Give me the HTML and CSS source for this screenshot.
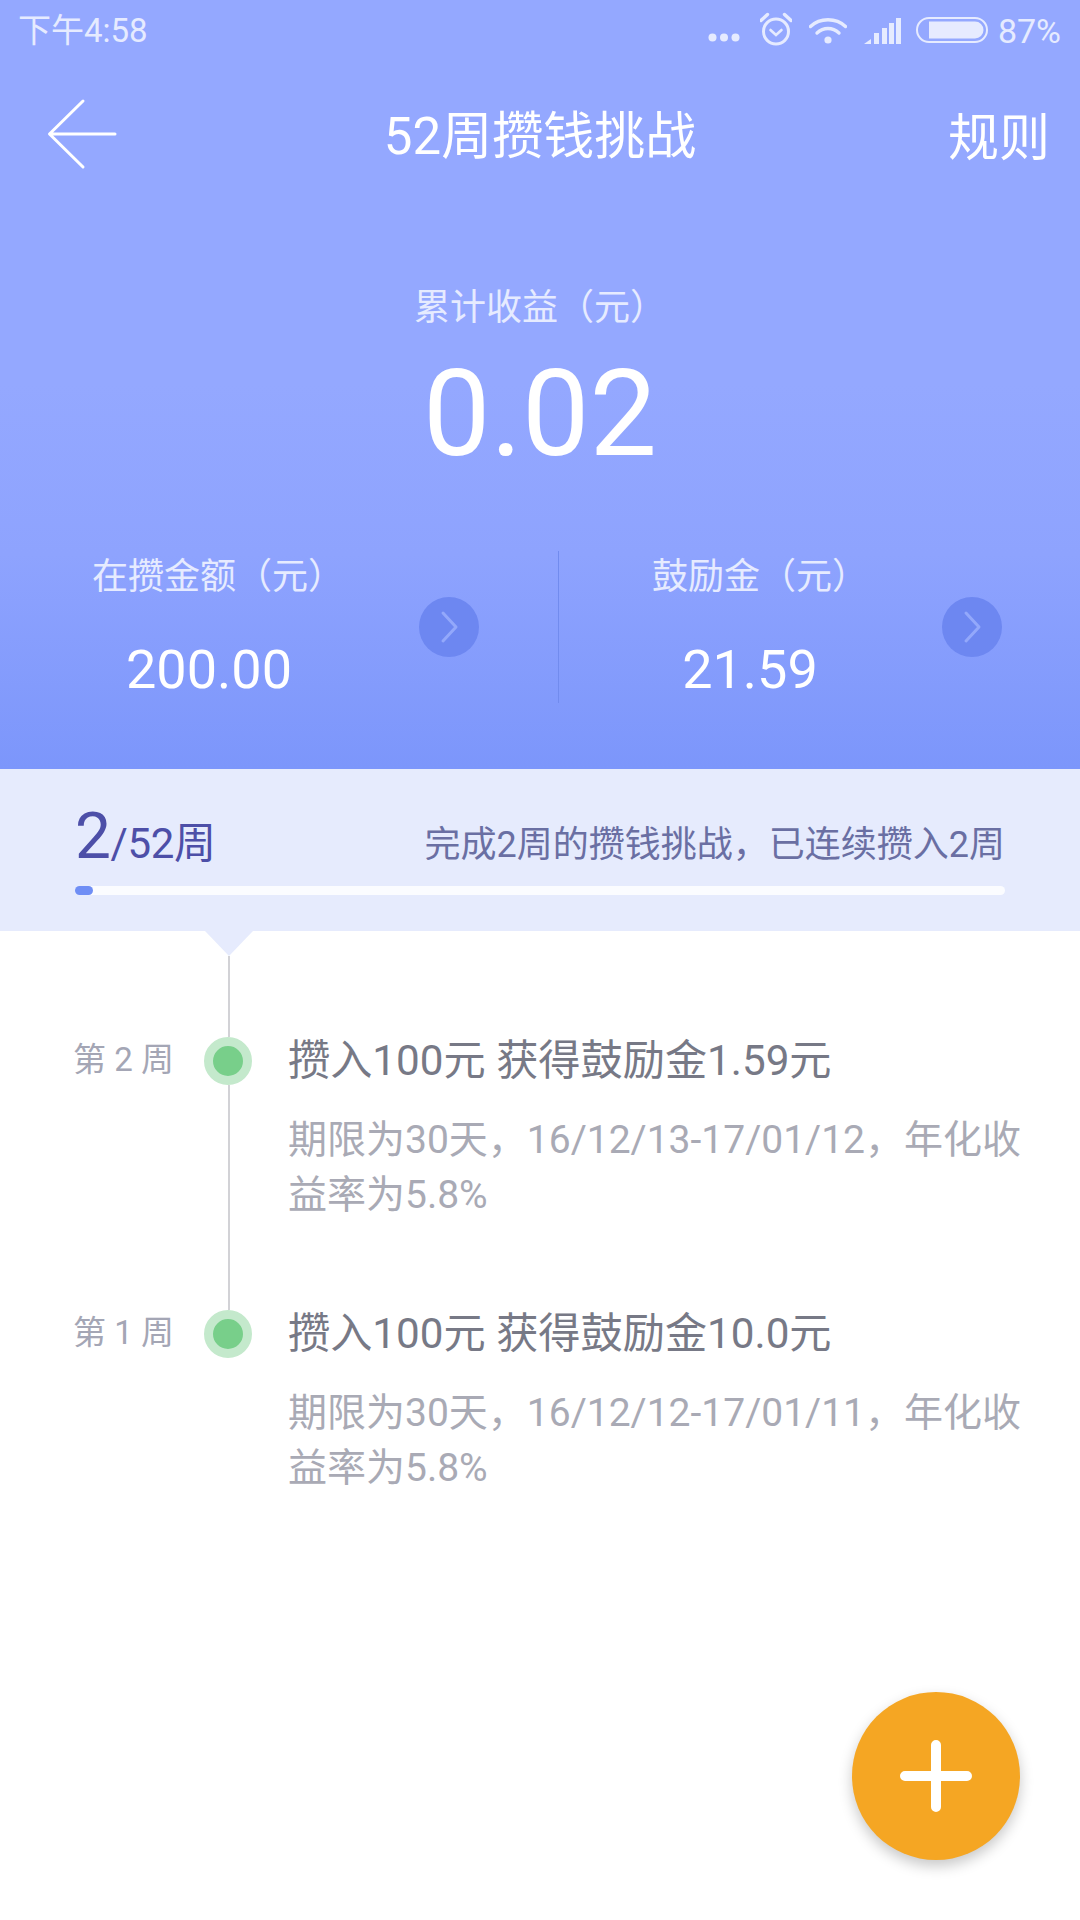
FILE: index.html
```html
<!DOCTYPE html>
<html lang="zh-CN">
<head>
<meta charset="utf-8">
<title>52周攒钱挑战</title>
<link rel="stylesheet" href="styles.css">
</head>
<body>
<div class="page">
  <header class="hero">
    <div class="status">
      <span class="status-time">下午4:58</span>
      <div class="status-right">
        <svg class="ic-dots" viewBox="0 0 32 9" width="32" height="9"><circle cx="4.5" cy="4.5" r="4"/><circle cx="16" cy="4.5" r="4"/><circle cx="27.5" cy="4.5" r="4"/></svg>
        <svg class="ic-alarm" viewBox="0 0 32 34" width="32" height="34"><circle cx="16" cy="19.5" r="12.5" class="ln" stroke-width="3"/><path d="M10.5 18l5.5 5 5.5-5" class="ln" stroke-width="2.6"/><path d="M1 8.5 7.5 2.5M31 8.5 24.500 2.500" class="ln" stroke-width="3.4"/></svg>
        <svg class="ic-wifi" viewBox="0 0 38 27" width="38" height="27"><path d="M1.500 9.500C11 .5 27 .5 36.500 9.500" class="ln" stroke-width="3.400"/><path d="M8 16C14.500 10 23.500 10 30 16" class="ln" stroke-width="3.400"/><circle cx="19" cy="23" r="3.600"/></svg>
        <svg class="ic-signal" viewBox="0 0 37 26" width="37" height="26"><path d="M0 26 7 21V26Z"/><rect x="10" y="15" width="5" height="11"/><rect x="18" y="10" width="5" height="16"/><rect x="25" y="5" width="5" height="21"/><rect x="32" y="0" width="5" height="26"/></svg>
        <svg class="ic-batt" viewBox="0 0 72 26" width="72" height="26"><rect x="1" y="1" width="70" height="24" rx="12" class="ln" stroke-width="2"/><path d="M13 4.500H59a8.500 8.500 0 0 1 0 17H13Z"/></svg>
        <span class="status-pct">87%</span>
      </div>
    </div>
    <nav class="nav">
      <svg class="nav-back" viewBox="0 0 72 72" width="72" height="72"><path d="M69 36H4M37 3 3.500 36 37 69"/></svg>
      <h1 class="nav-title">52周攒钱挑战</h1>
      <span class="nav-rule">规则</span>
    </nav>
    <div class="total">
      <div class="total-label">累计收益（元）</div>
      <div class="total-value">0.02</div>
    </div>
    <div class="stats">
      <div class="stat stat-left">
        <div class="stat-text">
          <div class="stat-label">在攒金额（元）</div>
          <div class="stat-value">200.00</div>
        </div>
        <span class="go"><svg viewBox="0 0 60 60" width="60" height="60"><path d="M24 16 37 30 24 44"/></svg></span>
      </div>
      <div class="stat stat-right">
        <div class="stat-text">
          <div class="stat-label">鼓励金（元）</div>
          <div class="stat-value">21.59</div>
        </div>
        <span class="go"><svg viewBox="0 0 60 60" width="60" height="60"><path d="M24 16 37 30 24 44"/></svg></span>
      </div>
    </div>
  </header>

  <section class="band">
    <div class="band-row">
      <div class="band-count"><b>2</b>/52周</div>
      <div class="band-note">完成2周的攒钱挑战，已连续攒入2周</div>
    </div>
    <div class="bar"><div class="bar-fill"></div></div>
  </section>

  <main class="timeline">
    <div class="lead"><span class="notch"></span><span class="stem"></span></div>
    <article class="item">
      <div class="item-week">第 2 周</div>
      <div class="rail"><span class="dot"></span><span class="rail-line"></span></div>
      <div class="item-body">
        <h2 class="item-title">攒入100元 获得鼓励金1.59元</h2>
        <p class="item-desc">期限为30天，16/12/13-17/01/12，年化收益率为5.8%</p>
      </div>
    </article>
    <article class="item">
      <div class="item-week">第 1 周</div>
      <div class="rail"><span class="dot"></span></div>
      <div class="item-body">
        <h2 class="item-title">攒入100元 获得鼓励金10.0元</h2>
        <p class="item-desc">期限为30天，16/12/12-17/01/11，年化收益率为5.8%</p>
      </div>
    </article>
  </main>

  <button class="fab" type="button" aria-label="add"><svg viewBox="0 0 72 72" width="72" height="72"><path d="M5 36H67M36 5V67"/></svg></button>
</div>
</body>
</html>
```

FILE: styles.css
```css
* { box-sizing: border-box; }
html, body { margin: 0; padding: 0; background: #fff; }
body { font-family: Roboto, "Noto Sans CJK SC", sans-serif; }
.page { position: relative; width: 1080px; height: 1920px; overflow: hidden; display: flex; flex-direction: column; }

.hero { height: 769px; background: linear-gradient(180deg, #94a8ff 0%, #94a8ff 50%, #8ea3fe 72%, #7c96fb 100%); color: #fff; display: flex; flex-direction: column; }

.status { height: 60px; display: flex; align-items: center; justify-content: space-between; padding: 0 19px 0 18px; color: #e6ebff; font-size: 33px; line-height: 56px; }
.status-time { margin-top: 2px; }
.status-pct { margin-top: 2px; font-size: 34px; }
.status-right { display: flex; align-items: center; }
.status-right svg { fill: #e6ebff; display: block; }
.status-right .ln { fill: none; stroke: #e6ebff; stroke-linecap: round; }
.ic-dots { margin: 15px 20px 0 0; }
.ic-alarm { margin: -2px 17px 0 0; }
.ic-wifi { margin: 0 17px 0 0; }
.ic-signal { margin: 1px 15px 0 0; }
.ic-batt { margin: 0 10px 0 0; }

.nav { height: 148px; display: flex; align-items: center; justify-content: space-between; padding: 0 30px 0 46px; position: relative; }
.nav-back { display: block; width: 72px; height: 72px; fill: none; stroke: #fff; stroke-width: 3; stroke-linecap: round; stroke-linejoin: round; }
.nav-title { position: absolute; left: 0; right: 0; top: 47px; line-height: 60px; text-align: center; margin: 0; font-size: 51px; font-weight: 400; pointer-events: none; }
.nav-rule { font-size: 51px; line-height: 60px; margin-top: 10px; }

.total { margin-top: 78px; text-align: center; }
.total-label { font-size: 36px; line-height: 44px; color: #e6ebff; }
.total-value { font-size: 120px; line-height: 140px; margin-top: 14px; font-weight: 400; }

.stats { margin-top: 67px; height: 152px; display: flex; }
.stat { display: flex; position: relative; height: 152px; }
.stat-left { width: 559px; border-right: 1px solid #718bee; padding-left: 92px; }
.stat-right { flex: 1; padding-left: 93px; }
.stat-text { text-align: center; }
.stat-left .stat-text { width: 234px; }
.stat-right .stat-text { width: 196px; }
.stat-label { font-size: 36px; line-height: 44px; margin-top: 4px; color: #e6ebff; white-space: nowrap; }
.stat-value { font-size: 54px; line-height: 60px; margin-top: 41px; }
.go { width: 60px; height: 60px; border-radius: 50%; background: #6d87f1; margin-top: 46px; display: block; }
.stat-left .go { margin-left: 93px; }
.stat-right .go { margin-left: 94px; }
.go svg { display: block; fill: none; stroke: #93a8fb; stroke-width: 3; stroke-linecap: round; stroke-linejoin: round; }

.band { height: 162px; background: #e6ebfd; padding: 0 75px; display: flex; flex-direction: column; }
.band-row { height: 117px; display: flex; justify-content: space-between; padding-top: 32px; }
.band-count { color: #4d4fa8; font-size: 42px; line-height: 72px; letter-spacing: -0.4px; }
.band-count b { font-weight: 400; font-size: 64px; }
.band-note { color: #6a6fa3; font-size: 36px; line-height: 64px; margin-top: 12px; }
.bar { height: 9px; background: #fbfcff; border-radius: 5px; width: 930px; }
.bar-fill { width: 18px; height: 9px; border-radius: 5px; background: #6f8ef5; }

.timeline { display: flex; flex-direction: column; }
.lead { height: 106px; width: 48px; margin-left: 205px; display: flex; flex-direction: column; align-items: center; }
.notch { width: 48px; height: 25px; background: #e6ebfd; clip-path: polygon(0 0, 100% 0, 50% 100%); flex: none; }
.stem { width: 2px; flex: 1; background: #d2d2d6; }
.item { height: 273px; display: grid; grid-template-columns: 131px 48px 1fr; margin-left: 73px; }
.item-week { font-size: 33px; line-height: 46px; color: #a4a6b5; }
.rail { display: flex; flex-direction: column; align-items: center; }
.dot { width: 48px; height: 48px; border-radius: 50%; background: #78cf8a; border: 9px solid #c4e9cc; flex: none; }
.rail-line { width: 2px; flex: 1; background: #d2d2d6; margin-left: 2px; }
.item-body { padding-left: 36px; }
.item-title { margin: 0; font-size: 42.2px; line-height: 48px; font-weight: 400; color: #777986; }
.item-desc { margin: 28px 0 0; width: 740px; font-size: 39px; line-height: 55px; color: #a9aab5; }

.fab { position: absolute; left: 852px; top: 1692px; width: 168px; height: 168px; border: 0; padding: 0; border-radius: 50%; background: #f5a623; box-shadow: 0 6px 14px rgba(0, 0, 0, .22); display: flex; align-items: center; justify-content: center; }
.fab svg { display: block; fill: none; stroke: #fff; stroke-width: 10; stroke-linecap: round; }
```
